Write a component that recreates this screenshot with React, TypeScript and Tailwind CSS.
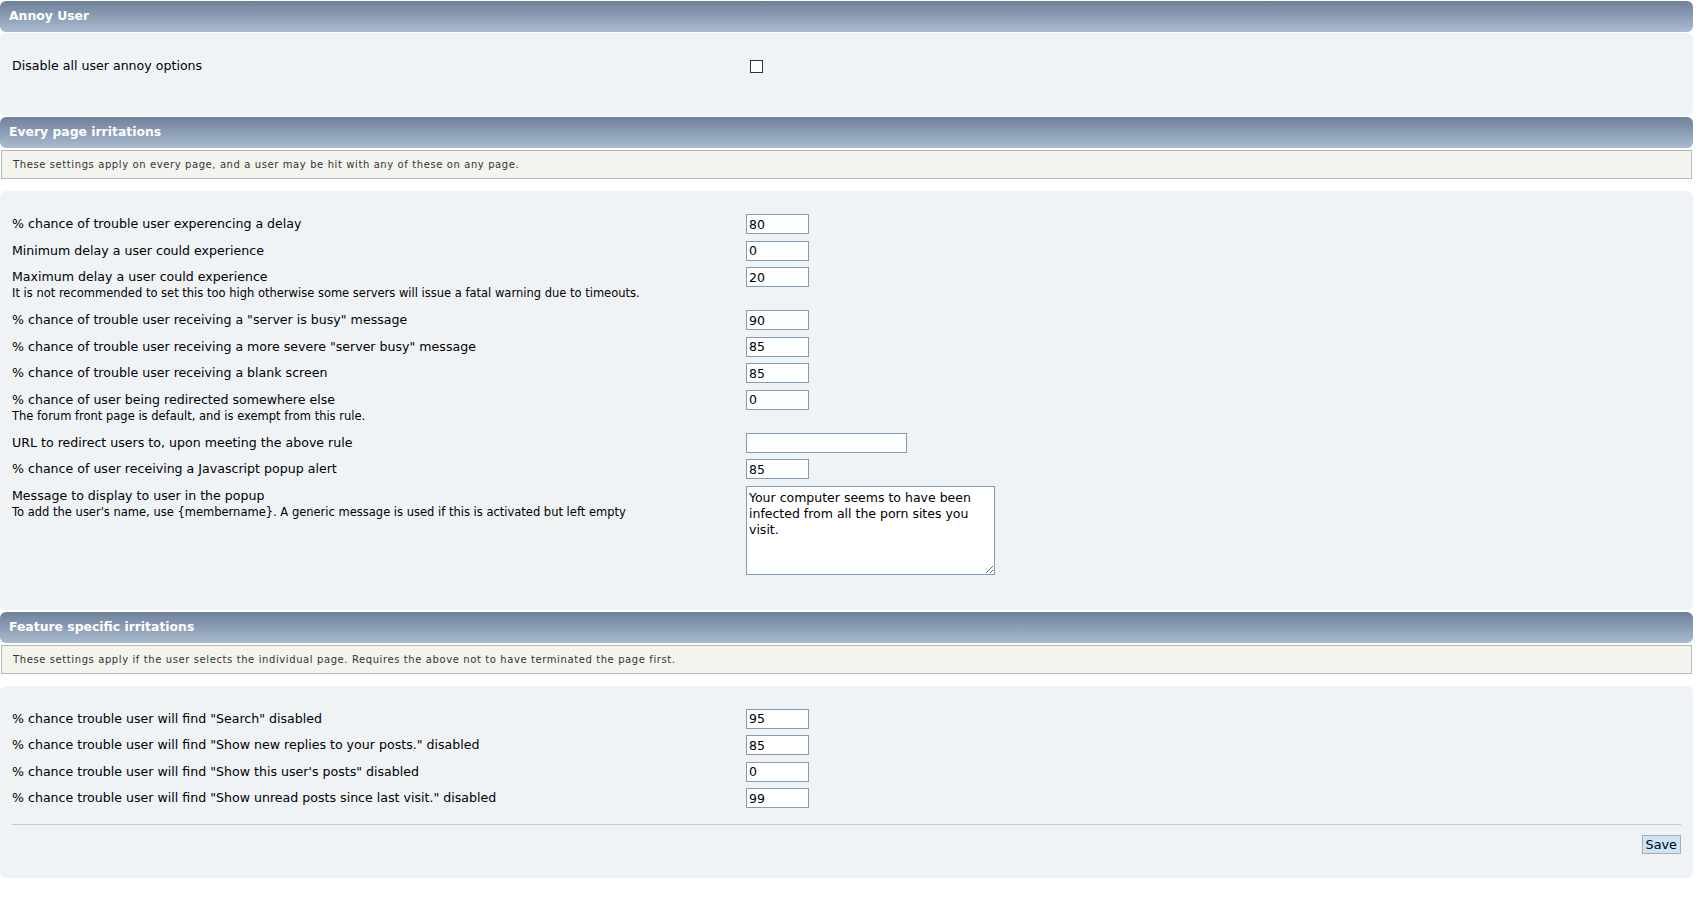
import React from "react";

type Row = {
    label: string;
    note?: string;
    value?: string;
    kind?: "text" | "wide" | "area";
};

const everyPage: Row[] = [
    { label: "% chance of trouble user experencing a delay", value: "80" },
    { label: "Minimum delay a user could experience", value: "0" },
    {
        label: "Maximum delay a user could experience",
        note: "It is not recommended to set this too high otherwise some servers will issue a fatal warning due to timeouts.",
        value: "20",
    },
    { label: '% chance of trouble user receiving a "server is busy" message', value: "90" },
    { label: '% chance of trouble user receiving a more severe "server busy" message', value: "85" },
    { label: "% chance of trouble user receiving a blank screen", value: "85" },
    {
        label: "% chance of user being redirected somewhere else",
        note: "The forum front page is default, and is exempt from this rule.",
        value: "0",
    },
    { label: "URL to redirect users to, upon meeting the above rule", value: "", kind: "wide" },
    { label: "% chance of user receiving a Javascript popup alert", value: "85" },
    {
        label: "Message to display to user in the popup",
        note: "To add the user's name, use {membername}. A generic message is used if this is activated but left empty",
        value: "Your computer seems to have been infected from all the porn sites you visit.",
        kind: "area",
    },
];

const featureRows: Row[] = [
    { label: '% chance trouble user will find "Search" disabled', value: "95" },
    { label: '% chance trouble user will find "Show new replies to your posts." disabled', value: "85" },
    { label: '% chance trouble user will find "Show this user\'s posts" disabled', value: "0" },
    { label: '% chance trouble user will find "Show unread posts since last visit." disabled', value: "99" },
];

const TitleBar = ({ title }: { title: string }) => (
    <div className="h-[31px] rounded-[6px] bg-gradient-to-b from-[#6f8299] to-[#aabbd1] pl-[9px] flex items-center text-white font-bold text-[12.4px]">
        {title}
    </div>
);

const Description = ({ text }: { text: string }) => (
    <div className="h-[29px] mx-[1px] border border-[#b8b8b8] bg-[#f3f4ee] pl-[11px] flex items-center text-[10px] tracking-[0.6px] text-[#333]">
        {text}
    </div>
);

const SettingRow = ({ row }: { row: Row }) => {
    const height = row.kind === "area" ? "h-[94px]" : row.note ? "h-[43px]" : "h-[26.5px]";
    return (
        <div className={`${height} flex items-start pt-[3px]`}>
            <div className="w-[734px] shrink-0">
                <div className="leading-[20px] text-[12.6px]">{row.label}</div>
                {row.note && <div className="leading-[13px] text-[11.5px]">{row.note}</div>}
            </div>
            {row.kind === "area" ? (
                <textarea
                    defaultValue={row.value}
                    className="w-[249px] h-[89px] bg-white border border-[#7f9db9] px-[2px] py-[3px] text-[12.5px] leading-[16px] outline-none"
                />
            ) : (
                <input
                    type="text"
                    defaultValue={row.value}
                    className={`${row.kind === "wide" ? "w-[161px]" : "w-[63px]"} h-[20px] bg-white border border-[#7f9db9] px-[2px] text-[12.5px] outline-none`}
                />
            )}
        </div>
    );
};

export default function App() {
    return (
        <div className="w-[1693px] pt-[1px] bg-white text-black font-['DejaVu_Sans',Verdana,sans-serif]">
            {/* Annoy User */}
            <TitleBar title="Annoy User" />
            <div className="mt-[1px] h-[83px] rounded-[6px] bg-[#eff3f6] px-[12px] pt-[23px]">
                <div className="h-[20px] flex items-center">
                    <div className="w-[734px] shrink-0 text-[12.6px]">Disable all user annoy options</div>
                    <span className="ml-[4px] mt-[1px] w-[13px] h-[13px] border border-[#333] bg-white" />
                </div>
            </div>

            {/* Every page irritations */}
            <div className="mt-[1px]">
                <TitleBar title="Every page irritations" />
            </div>
            <div className="mt-[2px]">
                <Description text="These settings apply on every page, and a user may be hit with any of these on any page." />
            </div>
            <div className="mt-[12px] rounded-[6px] bg-[#eff3f6] px-[12px] pt-[20px] pb-[33px]">
                {everyPage.map((row) => (
                    <SettingRow key={row.label} row={row} />
                ))}
            </div>

            {/* Feature specific irritations */}
            <div className="mt-[2px]">
                <TitleBar title="Feature specific irritations" />
            </div>
            <div className="mt-[2px]">
                <Description text="These settings apply if the user selects the individual page. Requires the above not to have terminated the page first." />
            </div>
            <div className="mt-[12px] rounded-[6px] bg-[#eff3f6] px-[12px] pt-[20px] pb-[24px]">
                {featureRows.map((row) => (
                    <SettingRow key={row.label} row={row} />
                ))}
                <div className="mt-[12px] border-t border-[#c8c8c8]" />
                <div className="mt-[10px] flex justify-end">
                    <button className="h-[19px] px-[3px] bg-[#cce4f7] border border-[#adadad] text-[12.8px] leading-[17px]">
                        Save
                    </button>
                </div>
            </div>
        </div>
    );
}
